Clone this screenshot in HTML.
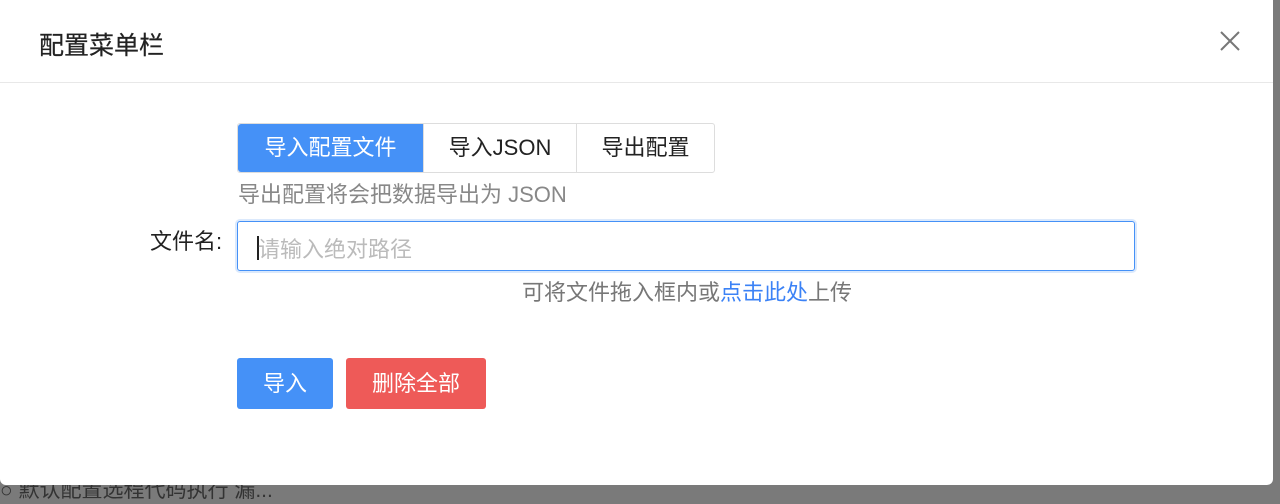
<!DOCTYPE html>
<html><head><meta charset="utf-8"><style>
body{margin:0;width:1280px;height:492px;overflow:hidden;background:#7a7a7a;font-family:"Liberation Sans","Noto Sans CJK SC",sans-serif;position:relative}
.bg{position:absolute;left:0;top:474px;font-size:21px;color:#333;white-space:nowrap}
.modal{position:absolute;left:0;top:0;width:1273px;height:485px;background:#fff;border-radius:0 0 6px 6px}
.title{position:absolute;left:39px;top:26px;font-size:25px;color:#222;-webkit-text-stroke:0.2px #222}
.hr{position:absolute;left:0;top:82px;width:1273px;height:1px;background:#e8e8e8}
.x{position:absolute;left:1220px;top:31px}
.seg{position:absolute;left:237px;top:123px;height:48px;display:flex;border:1px solid #ddd;border-radius:3px;font-size:22px}
.seg div{height:48px;line-height:48px;border-left:1px solid #ddd;color:#222;text-align:center}
.seg div:first-child{background:#4591f7;color:#fff;border-left:none;border-radius:3px 0 0 3px}
.hint{position:absolute;left:238px;top:177px;font-size:22px;color:#888}
.lbl{position:absolute;left:150px;top:224px;font-size:22px;color:#222}
.inp{position:absolute;left:237px;top:221px;width:896px;height:48px;border:1.5px solid #4591f7;border-radius:3px;box-shadow:0 0 0 2px #dbe9fc}
.inp span{position:absolute;left:20px;top:10px;font-size:22px;color:#bbb}
.inp i{position:absolute;left:19px;top:14px;width:1.5px;height:24px;background:#222}
.drop{position:absolute;left:522px;top:275px;font-size:22px;color:#777}
.drop b{font-weight:normal;color:#3b82f6}
.btn{position:absolute;top:358px;height:51px;line-height:51px;color:#fff;font-size:22px;text-align:center;border-radius:3px}
</style></head><body>
<div class="bg">○ 默认配置选程代码执行 漏...</div>
<div class="modal">
<div class="title">配置菜单栏</div>
<svg class="x" width="20" height="20" viewBox="0 0 20 20"><path d="M1 1L19 19M19 1L1 19" stroke="#777" stroke-width="2"/></svg>
<div class="hr"></div>
<div class="seg"><div style="width:185px">导入配置文件</div><div style="width:152px">导入JSON</div><div style="width:137px">导出配置</div></div>
<div class="hint">导出配置将会把数据导出为 JSON</div>
<div class="lbl">文件名:</div>
<div class="inp"><i></i><span>请输入绝对路径</span></div>
<div class="drop">可将文件拖入框内或<b>点击此处</b>上传</div>
<div class="btn" style="left:237px;width:96px;background:#4591f7">导入</div>
<div class="btn" style="left:346px;width:140px;background:#ee5a58">删除全部</div>
</div>
</body></html>
